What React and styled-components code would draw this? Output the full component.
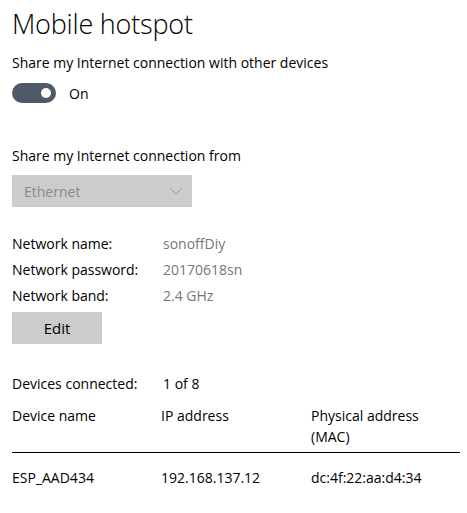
import React from "react";
import styled, { createGlobalStyle } from "styled-components";

const Global = createGlobalStyle`
  body {
    margin: 0;
    background: #ffffff;
    font-family: "Open Sans", "Noto Sans", sans-serif;
    color: #000000;
  }
`;

const Page = styled.div`
  width: 467px;
  height: 513px;
  box-sizing: border-box;
  padding: 4px 7px 0 12px;
  font-size: 14px;
`;

const Title = styled.h1`
  margin: 0;
  font-size: 27px;
  font-weight: 300;
  line-height: 40px;
  letter-spacing: -0.2px;
`;

const Label = styled.div`
  line-height: 20px;
  margin-top: ${(p) => p.$top || 0}px;
`;

const ToggleRow = styled.div`
  display: flex;
  align-items: center;
  gap: 13px;
  margin-top: 10px;
`;

const Toggle = styled.div`
  width: 44px;
  height: 20px;
  border-radius: 10px;
  background: #4f5968;
  display: flex;
  align-items: center;
  justify-content: flex-end;
  padding-right: 5px;
  box-sizing: border-box;

  &::after {
    content: "";
    width: 10px;
    height: 10px;
    border-radius: 50%;
    background: #ffffff;
  }
`;

const Select = styled.div`
  width: 180px;
  height: 32px;
  margin-top: 9px;
  background: #cccccc;
  color: #8a8a8a;
  display: flex;
  align-items: center;
  justify-content: space-between;
  padding: 0 10px 0 12px;
  box-sizing: border-box;
`;

const InfoGrid = styled.div`
  display: grid;
  grid-template-columns: 151px auto;
  row-gap: 6px;
  margin-top: 27px;
  line-height: 20px;
`;

const Value = styled.span`
  color: #767676;
`;

const Button = styled.button`
  display: block;
  margin-top: 6px;
  width: 90px;
  height: 32px;
  border: none;
  background: #cccccc;
  font-family: inherit;
  font-size: 15px;
  color: #000000;
  padding: 0;
`;

const Devices = styled.div`
  display: grid;
  grid-template-columns: 151px auto;
  margin-top: 30px;
  line-height: 20px;
`;

const Table = styled.div`
  display: grid;
  grid-template-columns: 149px 150px 1fr;
  margin-top: 11px;
  line-height: 21px;
`;

const HeadCell = styled.div`
  padding-bottom: 5px;
  border-bottom: 1px solid #000000;
`;

const Cell = styled.div`
  padding-top: 14px;
`;

export default function App() {
  return (
    <Page>
      <Global />
      <Title>Mobile hotspot</Title>
      <Label $top={9}>Share my Internet connection with other devices</Label>
      <ToggleRow>
        <Toggle />
        <span>On</span>
      </ToggleRow>

      <Label $top={43}>Share my Internet connection from</Label>
      <Select>
        <span>Ethernet</span>
        <svg width="12" height="7" viewBox="0 0 12 7">
          <path d="M0.5 0.5 L6 6 L11.5 0.5" fill="none" stroke="#9a9a9a" strokeWidth="1" />
        </svg>
      </Select>

      <InfoGrid>
        <span>Network name:</span>
        <Value>sonoffDiy</Value>
        <span>Network password:</span>
        <Value>20170618sn</Value>
        <span>Network band:</span>
        <Value>2.4 GHz</Value>
      </InfoGrid>
      <Button>Edit</Button>

      <Devices>
        <span>Devices connected:</span>
        <span>1 of 8</span>
      </Devices>

      <Table>
        <HeadCell>Device name</HeadCell>
        <HeadCell>IP address</HeadCell>
        <HeadCell>
          Physical address
          <br />
          (MAC)
        </HeadCell>
        <Cell>ESP_AAD434</Cell>
        <Cell>192.168.137.12</Cell>
        <Cell>dc:4f:22:aa:d4:34</Cell>
      </Table>
    </Page>
  );
}
